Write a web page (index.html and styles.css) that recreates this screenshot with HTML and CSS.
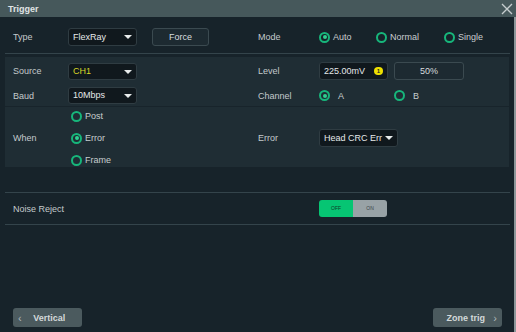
FILE: index.html
```html
<!DOCTYPE html>
<html lang="en">
<head>
<meta charset="UTF-8">
<meta name="viewport" content="width=device-width, initial-scale=1.0">
<title>Trigger</title>
<link rel="stylesheet" href="styles.css">
</head>
<body>

<div class="window">
    <div class="titlebar">
        <span class="title">Trigger</span>
        <svg class="close" width="12" height="12" viewBox="0 0 12 12">
            <path d="M1 1 L11 11 M11 1 L1 11" stroke="#c6cdcf" stroke-width="1.3" fill="none"/>
        </svg>
    </div>

    <div class="main">
        <div class="row top-row">
            <div class="half left">
                <span class="label">Type</span>
                <div class="select wide">FlexRay<span class="caret"></span></div>
                <button class="btn force">Force</button>
            </div>
            <div class="half right">
                <span class="label">Mode</span>
                <div class="radio-group">
                    <span class="radio checked mode-auto"><i></i>Auto</span>
                    <span class="radio mode-normal"><i></i>Normal</span>
                    <span class="radio"><i></i>Single</span>
                </div>
            </div>
        </div>
        <div class="sep"></div>

        <div class="panel">
            <div class="section">
                <div class="row">
                    <div class="half left">
                        <span class="label">Source</span>
                        <div class="select source">CH1<span class="caret"></span></div>
                    </div>
                    <div class="half right">
                        <span class="label">Level</span>
                        <div class="input">225.00mV<span class="badge">1</span></div>
                        <button class="btn pct">50%</button>
                    </div>
                </div>
                <div class="row">
                    <div class="half left">
                        <span class="label">Baud</span>
                        <div class="select">10Mbps<span class="caret"></span></div>
                    </div>
                    <div class="half right">
                        <span class="label">Channel</span>
                        <span class="radio checked chan-a"><i></i>A</span>
                        <span class="radio chan-b"><i></i>B</span>
                    </div>
                </div>
            </div>
            <div class="divider"></div>
            <div class="section when">
                <div class="half left">
                    <span class="label">When</span>
                    <div class="radio-col">
                        <span class="radio"><i></i>Post</span>
                        <span class="radio checked"><i></i>Error</span>
                        <span class="radio"><i></i>Frame</span>
                    </div>
                </div>
                <div class="half right">
                    <span class="label">Error</span>
                    <div class="select error">Head CRC Err<span class="caret"></span></div>
                </div>
            </div>
        </div>

        <div class="sep noise-sep"></div>
        <div class="row noise-row">
            <div class="half left">
                <span class="label">Noise Reject</span>
            </div>
            <div class="half right">
                <span class="label"></span>
                <div class="toggle">
                    <span class="off">OFF</span>
                    <span class="on">ON</span>
                </div>
            </div>
        </div>
        <div class="sep"></div>

        <div class="footer">
            <button class="nav-btn"><span class="arrow">&lsaquo;</span><span class="nav-text">Vertical</span></button>
            <button class="nav-btn"><span class="nav-text">Zone trig</span><span class="arrow">&rsaquo;</span></button>
        </div>
    </div>
</div>

</body>
</html>
```

FILE: styles.css
```css
body {
    margin: 0;
    padding: 0;
    background-color: #17232a;
    font-family: "Liberation Sans", Arial, sans-serif;
    font-size: 9px;
    color: #c4cacc;
}

.window {
    width: 516px;
    height: 332px;
    display: flex;
    flex-direction: column;
}

.titlebar {
    height: 17px;
    background-color: #46585b;
    display: flex;
    align-items: center;
    justify-content: space-between;
    padding: 0 3px 0 8px;
}

.title {
    font-weight: bold;
    font-size: 9px;
    color: #e0e5e6;
}

.main {
    flex: 1;
    display: flex;
    flex-direction: column;
    padding: 0 4px 0 5px;
    border-right: 2px solid #8d979a;
}

.row {
    display: flex;
    align-items: center;
}

.half {
    display: flex;
    align-items: center;
    width: 248px;
}

.half.left {
    padding-left: 8px;
    width: 240px;
}

.half.right {
    padding-left: 5px;
}

.label {
    width: 55px;
    flex-shrink: 0;
}

.half.right .label {
    width: 61px;
}

.top-row {
    padding: 11px 0 7px;
}

.sep {
    height: 1px;
    background-color: #34444b;
}

.select {
    position: relative;
    box-sizing: border-box;
    width: 69px;
    height: 17px;
    background-color: #10181d;
    border: 1px solid #2f3c42;
    border-radius: 3px;
    color: #e4e8e9;
    padding-left: 4px;
    line-height: 15px;
}

.select.wide {
    height: 18px;
    line-height: 16px;
}

.select.source {
    color: #d6d627;
}

.select.error {
    width: 79px;
    height: 18px;
    line-height: 16px;
}

.caret {
    position: absolute;
    right: 4px;
    top: 6px;
    width: 0;
    height: 0;
    border-left: 4px solid transparent;
    border-right: 4px solid transparent;
    border-top: 4px solid #e8ecec;
}

.btn {
    box-sizing: border-box;
    height: 18px;
    background-color: #1d2a31;
    border: 1px solid #3b4a50;
    border-radius: 3px;
    color: #d8dddf;
    font-family: "Liberation Sans", Arial, sans-serif;
    font-size: 9px;
    padding: 0;
}

.force {
    width: 57px;
    margin-left: 15px;
}

.pct {
    width: 70px;
    margin-left: 6px;
}

.radio-group {
    display: flex;
    align-items: center;
}

.radio {
    display: flex;
    align-items: center;
    color: #c8cdcf;
}

.radio i {
    box-sizing: border-box;
    width: 11px;
    height: 11px;
    border: 2px solid #17b67b;
    border-radius: 50%;
    margin-right: 3px;
    display: flex;
    align-items: center;
    justify-content: center;
}

.radio.checked i::after {
    content: "";
    width: 4px;
    height: 4px;
    border-radius: 50%;
    background-color: #2fd08f;
}

.mode-auto {
    width: 57px;
}

.mode-normal {
    width: 68px;
}

.panel {
    margin-top: 3px;
    background-color: #1f2d34;
    margin-right: 1px;
}

.section {
    padding: 5px 0 2px;
    display: flex;
    flex-direction: column;
    gap: 7px;
}

.input {
    position: relative;
    box-sizing: border-box;
    width: 69px;
    height: 18px;
    background-color: #10181d;
    border: 1px solid #2f3c42;
    border-radius: 3px;
    color: #e4e8e9;
    padding-left: 4px;
    line-height: 16px;
}

.badge {
    position: absolute;
    right: 4px;
    top: 4px;
    width: 9px;
    height: 8px;
    background-color: #eee000;
    border-radius: 4px;
    color: #20262a;
    font-size: 6px;
    font-weight: bold;
    line-height: 8px;
    text-align: center;
}

.chan-a i {
    margin-right: 8px;
}

.chan-a {
    width: 75px;
}

.chan-b i {
    margin-right: 8px;
}

.divider {
    height: 1px;
    background-color: #18242b;
}

.section.when {
    flex-direction: row;
    padding: 2px 0 0;
    gap: 0;
    align-items: center;
}

.radio-col {
    display: flex;
    flex-direction: column;
    gap: 8px;
    padding-left: 3px;
}

.radio-col .radio {
    height: 14px;
}

.noise-sep {
    margin-top: 25px;
}

.noise-row {
    padding: 7px 0 7px;
}

.toggle {
    display: flex;
    width: 68px;
    height: 17px;
    border-radius: 3px;
    overflow: hidden;
    font-size: 5px;
    line-height: 17px;
    text-align: center;
}

.toggle .off {
    width: 34px;
    background-color: #06c573;
    color: #0e3b27;
}

.toggle .on {
    width: 34px;
    background-color: #98a2a6;
    color: #3b4549;
}

.footer {
    margin-top: auto;
    display: flex;
    justify-content: space-between;
    padding: 0 8px 5px;
}

.nav-btn {
    display: flex;
    align-items: center;
    justify-content: space-between;
    box-sizing: border-box;
    width: 69px;
    height: 19px;
    background-color: #4b5a5e;
    border: none;
    border-radius: 3px;
    color: #d3d9da;
    font-family: "Liberation Sans", Arial, sans-serif;
    font-size: 9px;
    font-weight: bold;
    padding: 0 5px;
}

.nav-btn .arrow {
    font-size: 11px;
    font-weight: normal;
    color: #aeb7ba;
}

.nav-btn .nav-text {
    flex: 1;
    text-align: center;
}
```
